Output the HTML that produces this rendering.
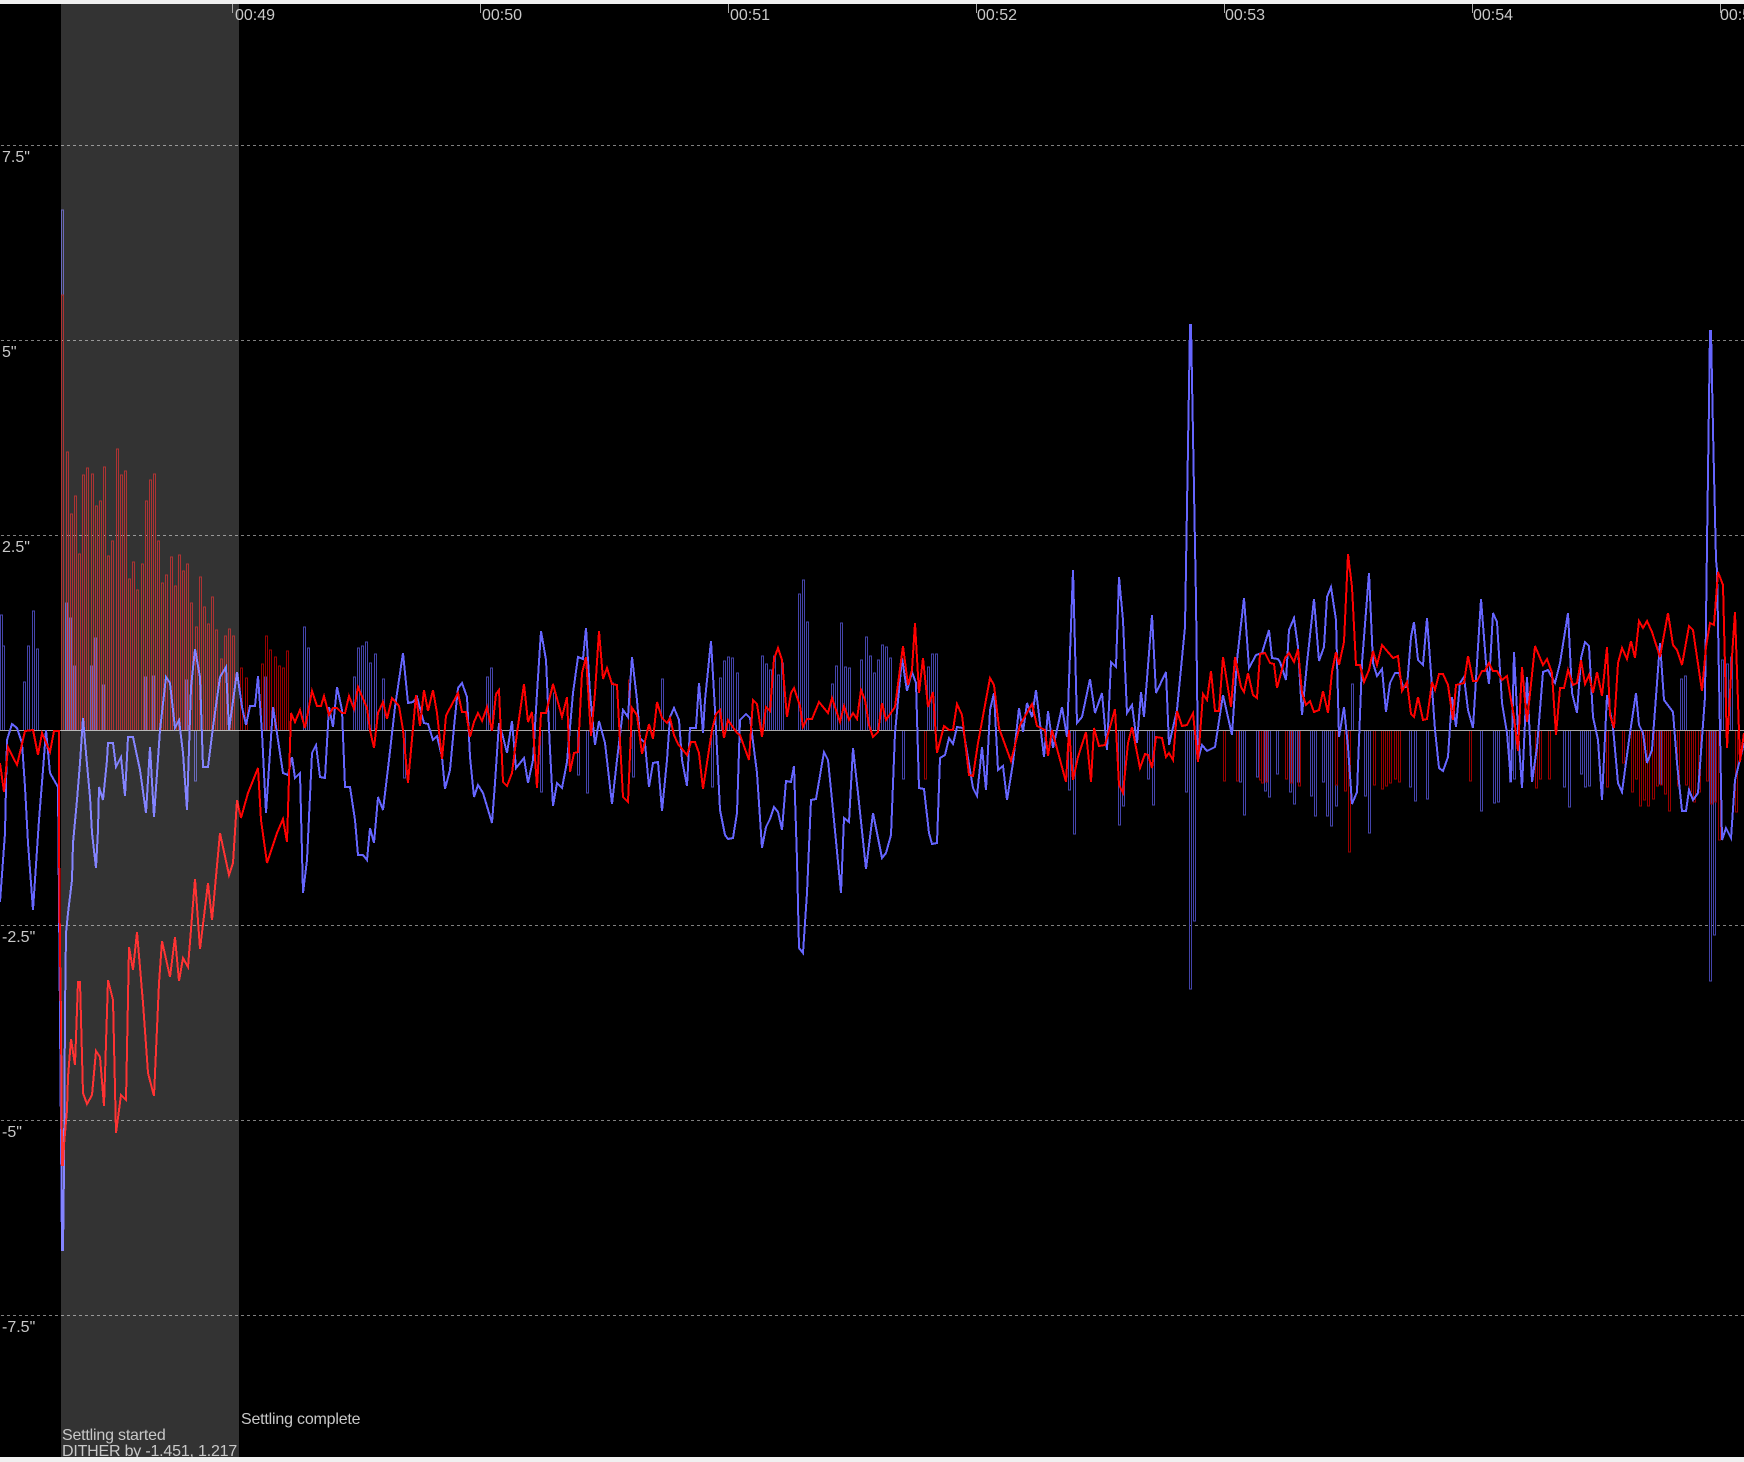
<!DOCTYPE html>
<html><head><meta charset="utf-8"><title>Guide graph</title>
<style>
html,body{margin:0;padding:0;background:#000;width:1744px;height:1462px;overflow:hidden}
svg{display:block}
text{font-family:"Liberation Sans",Arial,sans-serif;font-size:16px;fill:#c8c8c8}
.t{letter-spacing:-.2px}
</style></head><body>
<svg width="1744" height="1462" viewBox="0 0 1744 1462" xmlns="http://www.w3.org/2000/svg">
<rect width="1744" height="1462" fill="#000"/>
<g fill="none" stroke="#808080" stroke-width="1" stroke-dasharray="3 3" shape-rendering="crispEdges">
<path d="M1 145.5H1744M1 340.5H1744M1 535.5H1744M1 925.5H1744M1 1120.5H1744M1 1315.5H1744"/>
</g>
<g fill="none" stroke="#44a" stroke-width="1" shape-rendering="crispEdges">
<path d="M0.5 730V615h2V730M2.5 730V646h2V730M23.5 730V682h2V730M27.5 730V646h2V730M32.5 730V611h2V730M36.5 730V649h2V730M61.5 730V210h2V730M65.5 730V603h2V730M69.5 730V618h2V730M73.5 730V666h2V730M90.5 730V666h2V730M94.5 730V638h2V730M102.5 730V685h2V730M144.5 730V677h2V730M152.5 730V676h2V730M185.5 730V680h2V730M264.5 730V677h2V730M194.5 730V781h2V730"/>
<path d="M303.5 730V627h2V730M307.5 730V648h2V730M353.5 730V677h2V730M357.5 730V648h2V730M361.5 730V646h2V730M365.5 730V642h2V730M369.5 730V663h2V730M374.5 730V654h2V730M382.5 730V679h2V730M403.5 730V778h2V730M486.5 730V677h2V730M490.5 730V668h2V730M540.5 730V792h2V730M553.5 730V693h2V730M577.5 730V775h2V730M586.5 730V793h2V730M611.5 730V683h2V730M632.5 730V777h2V730M661.5 730V679h2V730M711.5 730V787h2V730M719.5 730V678h2V730M723.5 730V661h2V730M727.5 730V657h2V730M731.5 730V658h2V730M736.5 730V673h2V730M761.5 730V656h2V730M765.5 730V664h2V730M769.5 730V670h2V730M773.5 730V656h2V730M777.5 730V675h2V730M781.5 730V663h2V730M798.5 730V594h2V730"/>
<path d="M802.5 730V580h2V730M806.5 730V622h2V730M831.5 730V684h2V730M835.5 730V666h2V730M840.5 730V623h2V730M844.5 730V667h2V730M848.5 730V668h2V730M860.5 730V660h2V730M865.5 730V637h2V730M869.5 730V656h2V730M873.5 730V673h2V730M877.5 730V660h2V730M881.5 730V645h2V730M885.5 730V647h2V730M889.5 730V658h2V730M902.5 730V779h2V730M927.5 730V667h2V730M931.5 730V654h2V730M935.5 730V654h2V730M1068.5 730V790h2V730M1073.5 730V834h2V730M1118.5 730V825h2V730M1122.5 730V806h2V730M1147.5 730V779h2V730M1152.5 730V805h2V730M1185.5 730V792h2V730M1189.5 730V989h2V730M1193.5 730V921h2V730M1239.5 730V782h2V730M1243.5 730V815h2V730M1256.5 730V777h2V730M1264.5 730V791h2V730M1268.5 730V797h2V730M1276.5 730V774h2V730M1289.5 730V792h2V730M1293.5 730V804h2V730M1297.5 730V782h2V730"/>
<path d="M1310.5 730V796h2V730M1314.5 730V816h2V730M1322.5 730V782h2V730M1326.5 730V816h2V730M1330.5 730V826h2V730M1335.5 730V806h2V730M1351.5 730V684h2V730M1364.5 730V796h2V730M1368.5 730V833h2V730M1409.5 730V787h2V730M1414.5 730V801h2V730M1426.5 730V799h2V730M1480.5 730V811h2V730M1493.5 730V803h2V730M1497.5 730V802h2V730M1509.5 730V782h2V730M1513.5 730V779h2V730M1563.5 730V787h2V730M1568.5 730V807h2V730M1580.5 730V774h2V730M1584.5 730V787h2V730M1588.5 730V786h2V730M1659.5 730V784h2V730M1680.5 730V679h2V730M1684.5 730V676h2V730M1709.5 730V981h2V730M1713.5 730V935h2V730M1721.5 730V660h2V730M1726.5 730V664h2V730M1730.5 730V657h2V730"/>
</g>
<g fill="none" stroke="#900" stroke-width="1" shape-rendering="crispEdges">
<path d="M61.5 730V295h2V730M66.5 730V452h2V730M70.5 730V514h2V730M74.5 730V496h2V730M78.5 730V554h2V730M82.5 730V475h2V730M86.5 730V468h2V730M91.5 730V474h2V730M95.5 730V506h2V730M99.5 730V501h2V730M103.5 730V467h2V730M107.5 730V556h2V730M111.5 730V541h2V730M116.5 730V449h2V730M120.5 730V475h2V730M124.5 730V471h2V730M128.5 730V579h2V730M132.5 730V562h2V730M136.5 730V590h2V730M141.5 730V564h2V730M145.5 730V501h2V730M149.5 730V480h2V730M153.5 730V474h2V730M157.5 730V541h2V730M161.5 730V583h2V730M165.5 730V575h2V730M170.5 730V557h2V730M174.5 730V586h2V730M178.5 730V555h2V730M182.5 730V571h2V730M186.5 730V564h2V730M190.5 730V603h2V730M195.5 730V627h2V730M199.5 730V577h2V730M203.5 730V607h2V730M207.5 730V624h2V730M211.5 730V597h2V730M215.5 730V630h2V730M220.5 730V659h2V730M224.5 730V636h2V730M228.5 730V629h2V730M232.5 730V636h2V730M240.5 730V668h2V730M245.5 730V678h2V730M261.5 730V664h2V730M265.5 730V636h2V730M269.5 730V650h2V730M274.5 730V657h2V730M278.5 730V666h2V730M282.5 730V668h2V730M286.5 730V651h2V730"/>
<path d="M628.5 730V680h2V730M924.5 730V779h2V730M1223.5 730V781h2V730M1236.5 730V781h2V730M1259.5 730V780h2V730M1261.5 730V783h2V730M1265.5 730V782h2V730M1285.5 730V779h2V730M1290.5 730V783h2V730M1298.5 730V786h2V730M1335.5 730V785h2V730M1344.5 730V791h2V730M1348.5 730V852h2V730M1373.5 730V785h2V730M1381.5 730V789h2V730M1385.5 730V786h2V730M1389.5 730V783h2V730M1394.5 730V779h2V730M1398.5 730V782h2V730M1469.5 730V781h2V730M1535.5 730V788h2V730M1539.5 730V779h2V730M1548.5 730V779h2V730M1606.5 730V787h2V730M1622.5 730V763h2V730M1631.5 730V792h2V730M1635.5 730V779h2V730M1639.5 730V806h2V730M1643.5 730V800h2V730M1647.5 730V806h2V730M1652.5 730V799h2V730M1656.5 730V786h2V730M1660.5 730V785h2V730M1664.5 730V794h2V730M1668.5 730V811h2V730M1677.5 730V786h2V730M1685.5 730V785h2V730M1689.5 730V792h2V730M1693.5 730V802h2V730M1698.5 730V792h2V730M1706.5 730V781h2V730M1710.5 730V804h2V730M1714.5 730V802h2V730M1718.5 730V840h2V730M1735.5 730V812h2V730"/>
</g>
<rect x="0" y="730" width="1744" height="1" fill="#a8a8a8" shape-rendering="crispEdges"/>
<polyline fill="none" stroke="#66f" stroke-width="2" shape-rendering="crispEdges" points="0,902 5,833 7,740 12,724 17,728 22,743 25,787 28,843 33,910 35,880 39,820 43,770 46,730 50,773 58,787 59,903 61,1135 62,1250 63,1250 64,1170 65,1010 66,933 68,913 72,880 73,843 77,800 80,763 83,718 86,753 90,797 92,833 96,868 98,830 99,787 103,800 107,760 108,743 113,743 116,767 121,757 125,796 128,737 133,737 140,770 146,813 150,747 154,817 160,730 166,677 170,683 175,728 179,720 183,753 187,810 191,687 195,649 200,677 203,767 208,767 213,727 220,677 226,667 229,730 237,672 242,707 246,725 250,706 255,706 258,676 262,733 266,813 273,707 283,773 288,775 292,757 295,778 300,773 303,893 307,860 312,753 316,745 320,777 325,778 329,707 333,727 337,687 342,710 345,787 350,787 355,820 358,855 363,855 367,860 370,828 374,843 378,797 383,810 389,760 395,707 403,653 408,703 413,702 417,697 424,723 428,724 433,740 437,736 442,757 445,789 450,770 454,727 458,688 462,683 467,697 470,757 474,797 478,785 483,793 492,823 495,783 499,723 503,737 507,753 512,721 516,768 524,758 528,783 533,760 537,693 541,631 546,660 550,750 553,806 557,783 562,788 567,762 573,693 578,657 583,659 586,628 590,693 595,745 599,721 605,743 612,804 617,760 623,710 628,717 632,657 637,700 640,738 645,743 649,787 653,763 658,762 662,811 667,760 670,717 674,708 679,720 682,760 687,786 690,728 696,728 699,683 703,733 705,700 711,641 715,710 720,810 725,835 728,839 733,838 737,813 740,720 746,714 750,718 757,773 762,848 766,827 770,819 774,807 778,812 782,830 786,781 791,782 794,766 797,860 799,948 803,953 807,893 811,800 816,799 824,752 828,760 833,810 841,893 844,818 849,822 853,748 858,793 866,869 873,813 882,858 886,853 891,835 895,733 902,658 907,691 912,672 916,683 919,788 924,789 929,833 932,844 937,843 940,758 945,755 949,738 953,744 957,727 963,728 973,788 977,796 982,747 986,790 990,710 994,693 998,770 1003,766 1007,800 1013,763 1019,708 1023,732 1027,703 1032,717 1036,690 1044,757 1048,711 1053,748 1062,707 1067,737 1073,570 1077,723 1082,717 1090,679 1095,713 1102,693 1107,750 1111,662 1116,667 1119,577 1123,620 1127,713 1132,705 1137,743 1141,692 1144,717 1152,615 1156,693 1166,672 1169,745 1177,710 1185,627 1190,325 1191,325 1196,600 1198,760 1202,745 1207,751 1215,747 1223,695 1232,735 1237,660 1244,598 1249,668 1256,655 1262,653 1269,630 1272,658 1278,659 1280,662 1286,680 1289,630 1294,618 1298,647 1302,715 1307,663 1314,599 1319,661 1324,647 1327,597 1331,587 1336,620 1339,737 1344,707 1348,747 1352,804 1357,792 1362,663 1369,573 1373,663 1377,676 1382,669 1386,712 1390,683 1395,673 1399,673 1403,687 1407,687 1411,637 1414,622 1418,660 1423,665 1427,618 1431,673 1435,730 1439,768 1443,771 1448,757 1452,697 1456,727 1460,683 1464,677 1468,710 1473,728 1477,663 1481,599 1486,663 1489,684 1493,613 1497,622 1502,703 1507,733 1511,782 1514,652 1518,730 1522,788 1527,677 1532,782 1537,747 1543,672 1548,670 1555,683 1560,663 1568,613 1572,693 1577,713 1581,658 1585,642 1589,646 1593,717 1598,740 1602,800 1607,695 1613,727 1618,783 1622,792 1630,733 1636,693 1639,725 1643,733 1647,763 1652,750 1660,643 1664,700 1673,712 1677,763 1682,811 1686,811 1689,790 1693,800 1698,793 1705,697 1707,544 1710,331 1711,331 1713,430 1716,560 1717,570 1722,840 1726,828 1731,838 1735,780 1744,743"/>
<polyline fill="none" stroke="#f00" stroke-width="2" shape-rendering="crispEdges" points="0,763 4,792 8,747 17,765 25,731 33,730 38,755 42,733 50,752 54,731 59,731 59,840 60,950 61,1017 62,1165 63,1165 64,1145 67,1110 68,1077 71,1039 75,1065 78,982 80,982 83,1093 87,1104 92,1095 96,1051 100,1057 104,1106 108,980 113,1000 116,1133 121,1095 126,1100 129,947 133,970 137,932 143,1003 148,1073 154,1096 159,983 162,941 170,977 175,937 179,981 183,958 188,967 195,879 200,949 208,883 212,920 220,833 229,875 233,863 237,800 241,818 248,793 258,768 261,820 267,863 277,833 283,819 287,842 291,713 295,722 300,710 305,728 312,691 317,706 321,706 324,696 329,715 333,708 337,708 342,713 345,713 349,696 354,709 358,687 367,708 370,730 374,748 378,713 383,702 387,719 392,698 399,706 403,730 408,783 416,695 420,726 424,690 428,711 433,690 437,713 442,759 446,716 450,708 458,693 462,712 466,712 470,737 474,722 478,713 482,721 487,707 492,731 496,694 499,690 503,782 507,786 512,773 517,733 524,684 528,722 532,712 537,788 541,713 546,713 553,684 562,717 567,697 570,772 574,753 578,752 582,673 586,657 591,736 595,693 599,631 603,679 607,668 612,684 617,685 623,797 628,802 632,708 637,715 642,754 649,724 653,739 657,702 662,718 667,723 670,718 674,735 678,744 687,755 691,742 695,742 699,753 703,789 712,730 716,714 720,710 724,738 728,720 737,733 740,735 749,760 753,700 757,704 762,737 766,707 770,711 774,659 778,648 782,660 787,717 791,693 794,688 800,706 803,727 807,719 812,719 819,702 828,713 832,698 840,722 844,706 849,720 853,713 857,719 861,690 865,700 869,725 873,737 878,732 882,703 886,720 895,707 903,646 908,685 912,670 915,623 919,693 923,658 928,707 933,692 937,753 944,726 949,730 953,730 957,704 962,715 969,775 973,776 978,743 990,678 994,685 999,728 1011,761 1020,725 1032,704 1037,726 1045,730 1048,756 1052,730 1066,782 1069,730 1073,780 1078,757 1086,732 1091,782 1094,728 1099,746 1105,745 1115,709 1119,785 1123,793 1128,743 1132,727 1140,768 1145,754 1148,755 1152,768 1156,737 1162,738 1166,757 1169,753 1173,760 1177,711 1182,726 1187,725 1193,713 1198,762 1203,694 1207,700 1211,671 1215,711 1219,711 1223,657 1231,707 1235,657 1241,687 1244,692 1248,673 1253,695 1257,698 1260,654 1265,653 1270,663 1274,664 1277,688 1285,658 1289,653 1294,662 1298,649 1302,693 1306,705 1310,701 1314,712 1319,710 1323,691 1328,713 1332,672 1336,652 1339,665 1344,642 1348,554 1352,587 1356,665 1360,665 1364,682 1369,670 1373,651 1377,665 1382,645 1393,658 1398,656 1402,691 1407,682 1411,714 1414,717 1418,697 1423,720 1427,719 1432,682 1435,690 1439,674 1443,674 1448,685 1453,720 1456,685 1464,683 1468,656 1473,681 1477,681 1482,671 1485,671 1489,663 1493,671 1497,671 1502,680 1507,676 1511,700 1514,717 1518,751 1522,667 1527,722 1535,646 1543,665 1547,659 1552,673 1556,735 1560,688 1564,688 1568,670 1573,685 1577,683 1581,660 1585,684 1589,675 1593,693 1597,672 1602,696 1607,647 1610,715 1614,728 1618,663 1622,648 1627,659 1631,641 1635,658 1639,621 1643,628 1647,621 1652,632 1660,657 1668,613 1673,645 1677,650 1682,665 1689,626 1693,630 1702,691 1706,647 1710,623 1714,625 1718,572 1723,585 1727,748 1732,657 1735,612 1740,762 1744,733"/>
<rect x="61" y="0" width="178" height="1462" fill="#fff" fill-opacity="0.2" shape-rendering="crispEdges"/>
<g stroke="#a8a8a8" stroke-width="1" shape-rendering="crispEdges">
<path d="M232.5 4V13M480.5 4V13M728.5 4V13M976.5 4V13M1224.5 4V13M1472.5 4V13M1720.5 4V13"/>
</g>
<text x="235" y="20">00:49</text>
<text x="482" y="20">00:50</text>
<text x="730" y="20">00:51</text>
<text x="977" y="20">00:52</text>
<text x="1225" y="20">00:53</text>
<text x="1473" y="20">00:54</text>
<text x="1720" y="20">00:55</text>
<text x="2" y="162">7.5"</text>
<text x="2" y="357">5"</text>
<text x="2" y="552">2.5"</text>
<text x="2" y="942">-2.5"</text>
<text x="2" y="1137">-5"</text>
<text x="2" y="1332">-7.5"</text>
<text class="t" x="241" y="1424">Settling complete</text>
<text class="t" x="62" y="1440">Settling started</text>
<text class="t" x="62" y="1456">DITHER by -1.451, 1.217</text>
<rect x="0" y="0" width="1744" height="4" fill="#f0f0f0"/>
<rect x="0" y="1457" width="1744" height="5" fill="#f0f0f0"/>
</svg>
</body></html>
